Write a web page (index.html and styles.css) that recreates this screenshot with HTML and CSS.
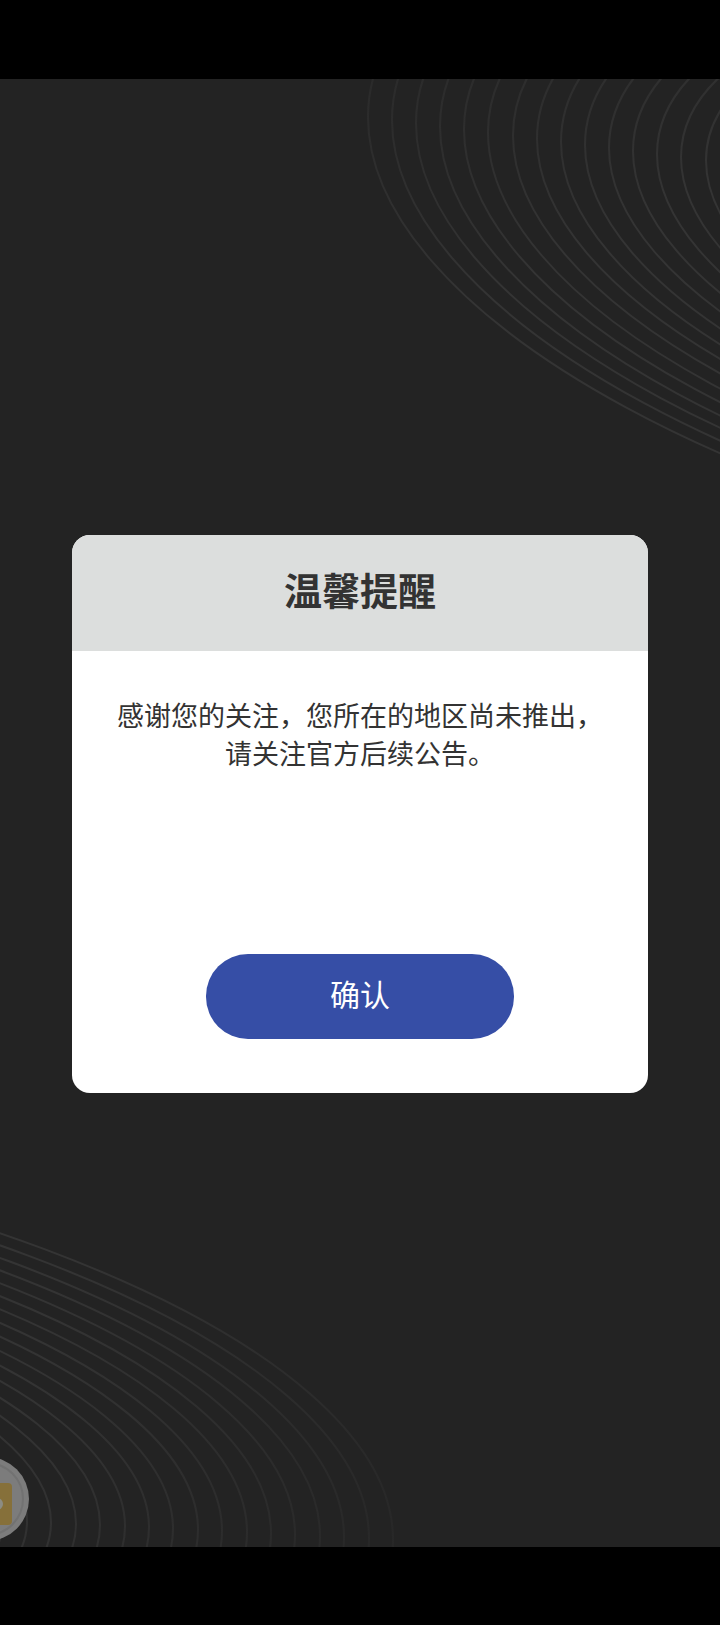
FILE: index.html
```
<!DOCTYPE html>
<html lang="zh-CN">

<head>
    <meta charset="utf-8">
    <meta name="viewport" content="width=device-width, initial-scale=1">
    <title>温馨提醒</title>
    <link rel="stylesheet" href="styles.css">
</head>

<body>
    <main class="stage">
        <svg class="rings rings-top" viewBox="350 79 370 400" aria-hidden="true">
            <defs>
                <linearGradient id="fadeTop" gradientUnits="userSpaceOnUse" x1="-860" y1="-150" x2="-700" y2="120">
                    <stop offset="0" stop-color="#272727" />
                    <stop offset="1" stop-color="#343434" />
                </linearGradient>
            </defs>
            <g transform="matrix(1 0.128 0 1 1250 230)" fill="none" stroke="url(#fadeTop)" stroke-width="2">
                <ellipse rx="882" ry="364" />
                <ellipse rx="858" ry="354" />
                <ellipse rx="834" ry="344" />
                <ellipse rx="810" ry="335" />
                <ellipse rx="786" ry="325" />
                <ellipse rx="762" ry="315" />
                <ellipse rx="737" ry="304" />
                <ellipse rx="713" ry="294" />
                <ellipse rx="689" ry="285" />
                <ellipse rx="665" ry="275" />
                <ellipse rx="641" ry="265" />
                <ellipse rx="617" ry="255" />
                <ellipse rx="593" ry="245" />
                <ellipse rx="569" ry="235" />
                <ellipse rx="544" ry="225" />
            </g>
        </svg>
        <svg class="rings rings-bottom" viewBox="0 1207 420 340" aria-hidden="true">
            <defs>
                <linearGradient id="fadeBottom" gradientUnits="userSpaceOnUse" x1="797" y1="-120" x2="1170" y2="80">
                    <stop offset="0" stop-color="#343434" />
                    <stop offset="1" stop-color="#272727" />
                </linearGradient>
            </defs>
            <g transform="matrix(1 0.05 0 1 -797 1480)" fill="none" stroke="url(#fadeBottom)" stroke-width="2">
                <ellipse rx="1190" ry="386" />
                <ellipse rx="1166" ry="376" />
                <ellipse rx="1141" ry="366" />
                <ellipse rx="1117" ry="356" />
                <ellipse rx="1092" ry="346" />
                <ellipse rx="1068" ry="336" />
                <ellipse rx="1044" ry="326" />
                <ellipse rx="1019" ry="316" />
                <ellipse rx="995" ry="306" />
                <ellipse rx="970" ry="296" />
                <ellipse rx="946" ry="286" />
                <ellipse rx="922" ry="276" />
                <ellipse rx="897" ry="266" />
                <ellipse rx="873" ry="255" />
                <ellipse rx="848" ry="244" />
                <ellipse rx="824" ry="233" />
                <ellipse rx="800" ry="222" />
            </g>
        </svg>

        <button class="float-ball" type="button" aria-label="悬浮球">
            <svg viewBox="0 0 30 84" aria-hidden="true">
                <circle cx="-13" cy="42" r="42" fill="#7c7c7c" />
                <circle cx="-13" cy="42" r="36" fill="none" stroke="#727272" stroke-width="2" />
                <rect x="-30" y="26" width="42" height="42" rx="4" fill="#86703a" />
                <circle cx="-3" cy="47" r="6" fill="#8c8c84" />
            </svg>
        </button>

        <section class="dialog" role="dialog" aria-labelledby="dialogTitle">
            <h1 class="dialog-title" id="dialogTitle">温馨提醒</h1>
            <div class="dialog-body">
                <p class="dialog-text">感谢您的关注，您所在的地区尚未推出，请关注官方后续公告。</p>
                <button class="confirm" type="button">确认</button>
            </div>
        </section>
    </main>
</body>

</html>
```
FILE: styles.css
```
* {
    box-sizing: border-box;
}

body {
    margin: 0;
    min-height: 100vh;
    padding: 79px 0 78px;
    display: flex;
    background: #000;
    color: #333;
    font-family: "Noto Sans CJK SC", sans-serif;
}

.stage {
    position: relative;
    flex: 1;
    display: flex;
    align-items: center;
    justify-content: center;
    padding-top: 2px;
    overflow: hidden;
    background: #232323;
}

/* decorative rings in the corners */
.rings {
    position: absolute;
}

.rings-top {
    top: 0;
    right: 0;
    width: 370px;
    height: 400px;
}

.rings-bottom {
    left: 0;
    bottom: 0;
    width: 420px;
    height: 340px;
}

.float-ball {
    position: absolute;
    left: 0;
    bottom: 6px;
    width: 30px;
    height: 84px;
    padding: 0;
    border: 0;
    background: none;
}

.float-ball svg {
    display: block;
}

.dialog {
    position: relative;
    width: 80%;
    border-radius: 18px;
    overflow: hidden;
    background: #fff;
    text-align: center;
}

.dialog-title {
    margin: 0;
    padding: 26px 0 34px;
    background: #dcdedd;
    font-size: 38px;
    line-height: 56px;
    font-weight: 700;
}

.dialog-body {
    display: flex;
    flex-direction: column;
    align-items: center;
    padding: 45px 40px 54px;
}

.dialog-text {
    margin: 0;
    min-height: 258px;
    font-size: 27px;
    line-height: 38px;
}

.confirm {
    width: 308px;
    height: 85px;
    padding: 0 0 8px;
    border: 0;
    border-radius: 42px;
    background: #364ea6;
    color: #fff;
    font-family: inherit;
    font-size: 30px;
    cursor: pointer;
}
```
